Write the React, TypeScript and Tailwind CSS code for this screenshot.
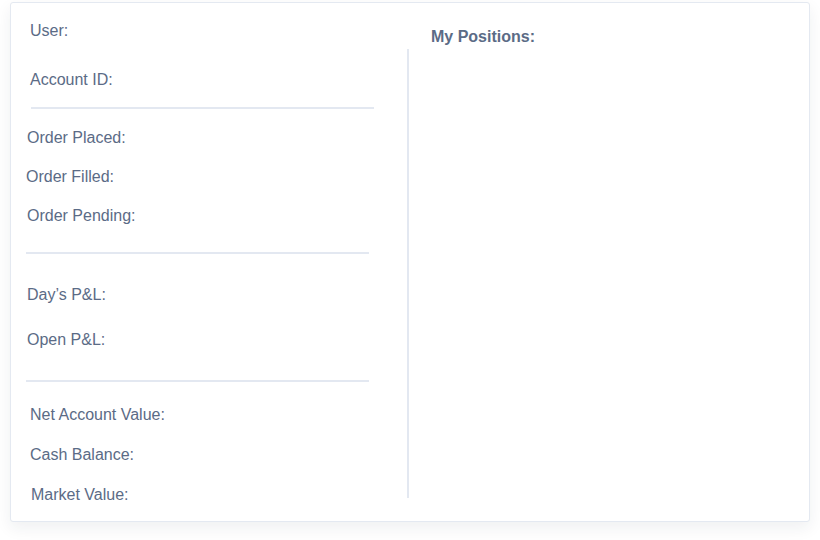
export default function App() {
  return (
    <div className="w-[820px] h-[540px] bg-white pt-[2px] pl-[10px]" style={{ fontFamily: '"Liberation Sans", Arial, sans-serif' }}>
      <div className="w-[800px] h-[520px] bg-white border border-[#e4e9f1] rounded-[3px] shadow-[0_6px_16px_rgba(30,41,59,0.07)] flex text-[16px] leading-[20px] text-[#5b6b86]">
        <div className="w-[396px] flex flex-col">
          <div className="mt-[18px] ml-[19px]">User:</div>
          <div className="mt-[29px] ml-[19px]">Account ID:</div>
          <div className="mt-[17px] ml-[20px] w-[343px] h-[2px] bg-[#e3e8f1]" />
          <div className="mt-[19px] ml-[16px]">Order Placed:</div>
          <div className="mt-[19px] ml-[15px]">Order Filled:</div>
          <div className="mt-[19px] ml-[16px]">Order Pending:</div>
          <div className="mt-[26px] ml-[15px] w-[343px] h-[2px] bg-[#e3e8f1]" />
          <div className="mt-[31px] ml-[16px]">Day’s P&amp;L:</div>
          <div className="mt-[25px] ml-[16px]">Open P&amp;L:</div>
          <div className="mt-[30px] ml-[15px] w-[343px] h-[2px] bg-[#e3e8f1]" />
          <div className="mt-[23px] ml-[19px]">Net Account Value:</div>
          <div className="mt-[20px] ml-[19px]">Cash Balance:</div>
          <div className="mt-[20px] ml-[20px]">Market Value:</div>
        </div>
        <div className="mt-[46px] w-[2px] h-[449px] bg-[#e3e8f1]" />
        <div className="pl-[22px] pt-[24px]">
          <div className="font-bold">My Positions:</div>
        </div>
      </div>
    </div>
  );
}
